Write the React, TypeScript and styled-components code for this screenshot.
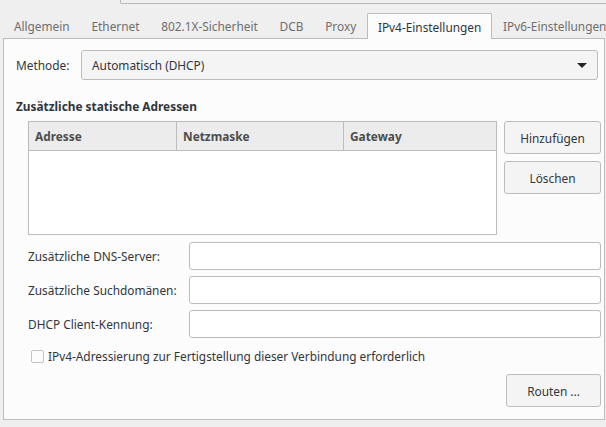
import React from "react";
import styled, { createGlobalStyle } from "styled-components";

const Global = createGlobalStyle`
  html, body { margin: 0; padding: 0; background: #efefef; }
  * { box-sizing: border-box; }
`;

const Root = styled.div`
  width: 606px;
  height: 427px;
  overflow: hidden;
  background: #efefef;
  font-family: "Noto Sans", "Open Sans", sans-serif;
  font-size: 11.85px;
  line-height: 16px;
  color: #31363b;
  display: flex;
  flex-direction: column;
`;

const TopFrame = styled.div`
  margin-left: 120px;
  height: 4px;
  border-left: 1px solid #b8b8b8;
  border-bottom: 1px solid #b8b8b8;
  border-bottom-left-radius: 2px;
`;

const TabBar = styled.div`
  display: flex;
  margin-top: 9px;
  padding-left: 3px;
  height: 25px;
  position: relative;
  z-index: 1;
`;

const Tab = styled.div<{ $active?: boolean }>`
  height: ${(p) => (p.$active ? "26px" : "25px")};
  padding: 0 ${(p) => (p.$active ? "9.8px" : "10.9px")};
  display: flex;
  align-items: center;
  white-space: nowrap;
  color: ${(p) => (p.$active ? "#31363b" : "#6e6e6e")};
  background: ${(p) => (p.$active ? "#fcfcfc" : "transparent")};
  border: ${(p) => (p.$active ? "1px solid #bcbcbc" : "none")};
  border-bottom: none;
  border-radius: 2px 2px 0 0;
  margin: ${(p) => (p.$active ? "0 0 -1px 0" : "0")};
`;

const Panel = styled.div`
  margin: 0 1px 0 3px;
  height: 382px;
  border: 1px solid #bcbcbc;
  background: #fcfcfc;
  display: flex;
  flex-direction: column;
  padding: 11px 3px 0 12px;
`;

const MethodRow = styled.div`
  display: flex;
  align-items: center;
  padding-right: 3px;
`;

const Label = styled.div<{ $width: number }>`
  width: ${(p) => p.$width}px;
  flex: none;
  white-space: nowrap;
`;

const Combo = styled.div`
  flex: 1;
  height: 30px;
  border: 1px solid #bcbcbc;
  border-radius: 3px;
  background: #f4f4f4;
  display: flex;
  align-items: center;
  justify-content: space-between;
  padding: 0 10px 0 10px;
`;

const Arrow = styled.div`
  width: 0;
  height: 0;
  border-left: 5px solid transparent;
  border-right: 5px solid transparent;
  border-top: 5px solid #232627;
`;

const SectionTitle = styled.div`
  margin-top: 16px;
  font-weight: bold;
  color: #31363b;
  line-height: 20px;
`;

const TableRow = styled.div`
  display: flex;
  margin-top: 5px;
  padding-left: 12px;
  gap: 7px;
`;

const Table = styled.div`
  width: 469px;
  height: 114px;
  border: 1px solid #bcbcbc;
  background: #ffffff;
  display: flex;
  flex-direction: column;
`;

const HeaderRow = styled.div`
  display: flex;
  height: 29px;
  background: #ececec;
  border-bottom: 1px solid #bcbcbc;
`;

const HeaderCell = styled.div<{ $width: number; $last?: boolean }>`
  width: ${(p) => p.$width}px;
  flex: ${(p) => (p.$last ? "1" : "none")};
  border-right: ${(p) => (p.$last ? "none" : "1px solid #bcbcbc")};
  display: flex;
  align-items: center;
  padding-left: 6px;
  font-weight: bold;
  color: #4d4d4d;
`;

const ButtonCol = styled.div`
  display: flex;
  flex-direction: column;
  gap: 7px;
`;

const Button = styled.div<{ $width: number }>`
  width: ${(p) => p.$width}px;
  height: 33px;
  border: 1px solid #bcbcbc;
  border-radius: 3px;
  background: #f4f4f4;
  display: flex;
  align-items: center;
  justify-content: center;
  color: #31363b;
`;

const FormRows = styled.div`
  display: flex;
  flex-direction: column;
  gap: 6px;
  margin-top: 7px;
  padding-left: 12px;
`;

const FormRow = styled.div`
  display: flex;
  align-items: center;
`;

const Input = styled.div`
  width: 412px;
  height: 28px;
  border: 1px solid #bcbcbc;
  border-radius: 3px;
  background: #ffffff;
`;

const CheckRow = styled.div`
  display: flex;
  align-items: center;
  margin-top: 10px;
  padding-left: 15px;
  gap: 4px;
`;

const CheckBox = styled.div`
  width: 13px;
  height: 13px;
  border: 1px solid #c4c4c4;
  border-radius: 2px;
  background: #fcfcfc;
`;

const BottomRow = styled.div`
  display: flex;
  justify-content: flex-end;
  margin-top: 10px;
`;

export default function App() {
  const tabs = [
    "Allgemein",
    "Ethernet",
    "802.1X-Sicherheit",
    "DCB",
    "Proxy",
    "IPv4-Einstellungen",
    "IPv6-Einstellungen",
  ];
  return (
    <Root>
      <Global />
      <TopFrame />
      <TabBar>
        {tabs.map((t) => (
          <Tab key={t} $active={t === "IPv4-Einstellungen"}>
            {t}
          </Tab>
        ))}
      </TabBar>
      <Panel>
        <MethodRow>
          <Label $width={65}>Methode:</Label>
          <Combo>
            <span>Automatisch (DHCP)</span>
            <Arrow />
          </Combo>
        </MethodRow>
        <SectionTitle>Zusätzliche statische Adressen</SectionTitle>
        <TableRow>
          <Table>
            <HeaderRow>
              <HeaderCell $width={148}>Adresse</HeaderCell>
              <HeaderCell $width={167}>Netzmaske</HeaderCell>
              <HeaderCell $width={152} $last>
                Gateway
              </HeaderCell>
            </HeaderRow>
          </Table>
          <ButtonCol>
            <Button $width={97}>Hinzufügen</Button>
            <Button $width={97}>Löschen</Button>
          </ButtonCol>
        </TableRow>
        <FormRows>
          <FormRow>
            <Label $width={161}>Zusätzliche DNS-Server:</Label>
            <Input />
          </FormRow>
          <FormRow>
            <Label $width={161}>Zusätzliche Suchdomänen:</Label>
            <Input />
          </FormRow>
          <FormRow>
            <Label $width={161}>DHCP Client-Kennung:</Label>
            <Input />
          </FormRow>
        </FormRows>
        <CheckRow>
          <CheckBox />
          <span>IPv4-Adressierung zur Fertigstellung dieser Verbindung erforderlich</span>
        </CheckRow>
        <BottomRow>
          <Button $width={95}>Routen ...</Button>
        </BottomRow>
      </Panel>
    </Root>
  );
}
